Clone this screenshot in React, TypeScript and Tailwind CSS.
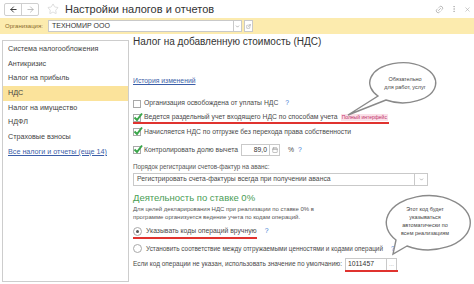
import { ArrowLeft, ArrowRight, Star, Link2, MoreVertical, X, ChevronDown, ExternalLink, Calendar } from "lucide-react";

const navItems = [
  "Система налогообложения",
  "Антикризис",
  "Налог на прибыль",
  "НДС",
  "Налог на имущество",
  "НДФЛ",
  "Страховые взносы",
];

const Check = ({ checked }: { checked?: boolean }) => (
  <span className="relative w-[8px] h-[8px] border border-[#a9a9a9] bg-white shrink-0">
    {checked && (
      <svg viewBox="0 0 10 10" className="absolute -left-[1px] -top-[3px] w-[10px] h-[10px]">
        <path d="M1.5 5.5 L4 8 L9 1.5" fill="none" stroke="#3aa64a" strokeWidth="2" />
      </svg>
    )}
  </span>
);

const Radio = ({ on }: { on?: boolean }) => (
  <span className="w-[9px] h-[9px] rounded-full border border-[#a9a9a9] bg-white shrink-0 flex items-center justify-center">
    {on && <span className="w-[3px] h-[3px] rounded-full bg-[#555]" />}
  </span>
);

const Q = () => <span className="text-[#3b7bd4] ml-[4px]">?</span>;

export default function App() {
  return (
    <div
      className="relative w-[474px] h-[284px] bg-white overflow-hidden text-[#4a4a4a]"
      style={{ fontFamily: "'Liberation Sans', Arial, sans-serif" }}
    >
      {/* title bar */}
      <div className="h-[18px] flex items-center pl-[4px] pr-[3px]">
        <div className="flex border border-[#cfcfcf] rounded-[2px] h-[13px]">
          <span className="w-[17px] flex items-center justify-center border-r border-[#cfcfcf]">
            <ArrowLeft className="w-[9px] h-[9px] text-[#333]" strokeWidth={2.5} />
          </span>
          <span className="w-[16px] flex items-center justify-center">
            <ArrowRight className="w-[9px] h-[9px] text-[#aaa]" strokeWidth={2} />
          </span>
        </div>
        <Star className="w-[12px] h-[12px] text-[#ccc] ml-[8px]" strokeWidth={1.3} />
        <span className="ml-[6px] text-[11px] text-[#333]">Настройки налогов и отчетов</span>
        <div className="ml-auto flex items-center gap-[6px] text-[#aaa]">
          <Link2 className="w-[9px] h-[9px] -rotate-45" />
          <MoreVertical className="w-[8px] h-[8px]" />
          <X className="w-[7px] h-[7px]" />
        </div>
      </div>

      {/* organisation bar */}
      <div className="h-[16px] bg-[#fcebae] flex items-center pl-[5px]">
        <span className="text-[6px] text-[#8a6a2a] w-[43px]">Организация:</span>
        <div className="w-[186px] h-[12px] bg-white border border-[#c9c9c9] flex items-center pl-[3px] text-[7px] text-[#333]">
          ТЕХНОМИР ООО
        </div>
        <div className="w-[8px] h-[12px] bg-white border-y border-r border-[#c9c9c9] flex items-center justify-center">
          <ChevronDown className="w-[5px] h-[5px] text-[#555]" />
        </div>
        <div className="ml-[2px] w-[9px] h-[12px] bg-white border border-[#c9c9c9] flex items-center justify-center">
          <ExternalLink className="w-[5px] h-[5px] text-[#888]" />
        </div>
      </div>

      <div className="flex mt-[6px]">
        {/* left panel */}
        <div className="ml-[2px] w-[127px] h-[242px] border border-[#cdcdcd] pt-[1px] text-[7.2px] text-[#444]">
          {navItems.map((t) => (
            <div
              key={t}
              className={`h-[14.7px] flex items-center pl-[5px] ${t === "НДС" ? "bg-[#fbe39b]" : ""}`}
            >
              {t}
            </div>
          ))}
          <div className="h-[14.7px] flex items-center pl-[5px] text-[#3b5ea8] underline">
            Все налоги и отчеты (еще 14)
          </div>
        </div>

        {/* right content */}
        <div className="ml-[4px] flex-1 text-[6.8px] relative -top-[5px]">
          <div className="text-[10px] text-[#333] h-[13px] leading-[13px]">
            Налог на добавленную стоимость (НДС)
          </div>
          <div className="mt-[27px] h-[12px] leading-[12px] text-[#3b5ea8] underline">История изменений</div>

          <div className="mt-[10px] flex items-center gap-[3px] h-[13px]">
            <Check />
            <span>Организация освобождена от уплаты НДС</span>
            <Q />
          </div>
          <div className="flex items-center gap-[3px] h-[15px] relative">
            <Check checked />
            <span>Ведется раздельный учет входящего НДС по способам учета</span>
            <span className="text-[5px] text-[#c0306a] bg-[#fbe0e8] px-[1px]">Полный интерфейс</span>
            <span className="absolute left-0 top-[12px] w-[256px] h-[1.5px] bg-[#e0332f]" />
          </div>
          <div className="flex items-center gap-[3px] h-[14px]">
            <Check checked />
            <span>Начисляется НДС по отгрузке без перехода права собственности</span>
          </div>
          <div className="mt-[3px] flex items-center h-[16px]">
            <Check checked />
            <span className="ml-[3px] w-[97px]">Контролировать долю вычета</span>
            <div className="w-[29px] h-[12px] border border-[#c9c9c9] flex items-center justify-end pr-[2px] text-[#333]">
              89,0
            </div>
            <div className="w-[10px] h-[12px] border-y border-r border-[#c9c9c9] flex items-center justify-center">
              <Calendar className="w-[6px] h-[6px] text-[#888]" />
            </div>
            <span className="ml-[8px]">%</span>
            <Q />
          </div>

          <div className="mt-[3px] h-[11px] leading-[11px] text-[6.3px] text-[#555]">
            Порядок регистрации счетов-фактур на аванс:
          </div>
          <div className="mt-[1px] w-[295px] h-[13px] border border-[#c9c9c9] flex items-center">
            <span className="pl-[3px] flex-1">Регистрировать счета-фактуры всегда при получении аванса</span>
            <span className="w-[13px] h-full border-l border-[#c9c9c9] flex items-center justify-center">
              <ChevronDown className="w-[5px] h-[5px] text-[#555]" />
            </span>
          </div>

          <div className="mt-[6px] text-[9.5px] text-[#4a9d55] h-[11px] leading-[11px]">
            Деятельность по ставке 0%
          </div>
          <div className="mt-[2px] text-[6px] leading-[8px] text-[#555] w-[205px]">
            Для целей декларирования НДС при реализации по ставке 0% в программе организуется ведение учета по кодам операций.
          </div>

          <div className="mt-[4px] flex items-center gap-[4px] h-[13px] relative">
            <Radio on />
            <span>Указывать коды операций вручную</span>
            <Q />
            <span className="absolute left-0 top-[12px] w-[124px] h-[1.5px] bg-[#e0332f]" />
          </div>
          <div className="mt-[4px] flex items-center gap-[4px] h-[13px] text-[6.4px]">
            <Radio />
            <span>Установить соответствие между отгружаемыми ценностями и кодами операций</span>
            <Q />
          </div>

          <div className="mt-[2px] flex items-center h-[14px]">
            <span className="text-[6.5px]">Если код операции не указан, использовать значение по умолчанию:</span>
            <div className="ml-[3px] relative w-[42px] h-[13px] border border-[#c9c9c9] flex items-center pl-[2px] text-[#333]">
              1011457
              <span className="absolute -left-[1px] -bottom-[2px] w-[53px] h-[1.5px] bg-[#e0332f]" />
            </div>
            <div className="w-[10px] h-[13px] border-y border-r border-[#c9c9c9] flex items-center justify-center text-[#999] text-[6px]">
              ...
            </div>
          </div>
        </div>
      </div>

      {/* callouts */}
      <svg className="absolute left-0 top-0 pointer-events-none" width="474" height="284">
        <path
          d="M 386 100 L 348 115 L 378 96 A 33 20 0 1 1 386 100 Z"
          fill="white"
          stroke="#8a8a8a"
          strokeWidth="1.4"
        />
        <path
          d="M 407 246 L 393 254 L 396 240 A 42 27 0 1 1 407 246 Z"
          fill="white"
          stroke="#8a8a8a"
          strokeWidth="1.4"
        />
      </svg>
      <div className="absolute left-[375px] top-[75px] w-[60px] text-center text-[5.5px] leading-[8px] text-[#444]">
        Обязательно
        <br />
        для работ, услуг
      </div>
      <div className="absolute left-[390px] top-[205px] w-[70px] text-center text-[5.5px] leading-[8px] text-[#444]">
        Этот код будет
        <br />
        указываться
        <br />
        автоматически по
        <br />
        всем реализациям
      </div>
    </div>
  );
}
